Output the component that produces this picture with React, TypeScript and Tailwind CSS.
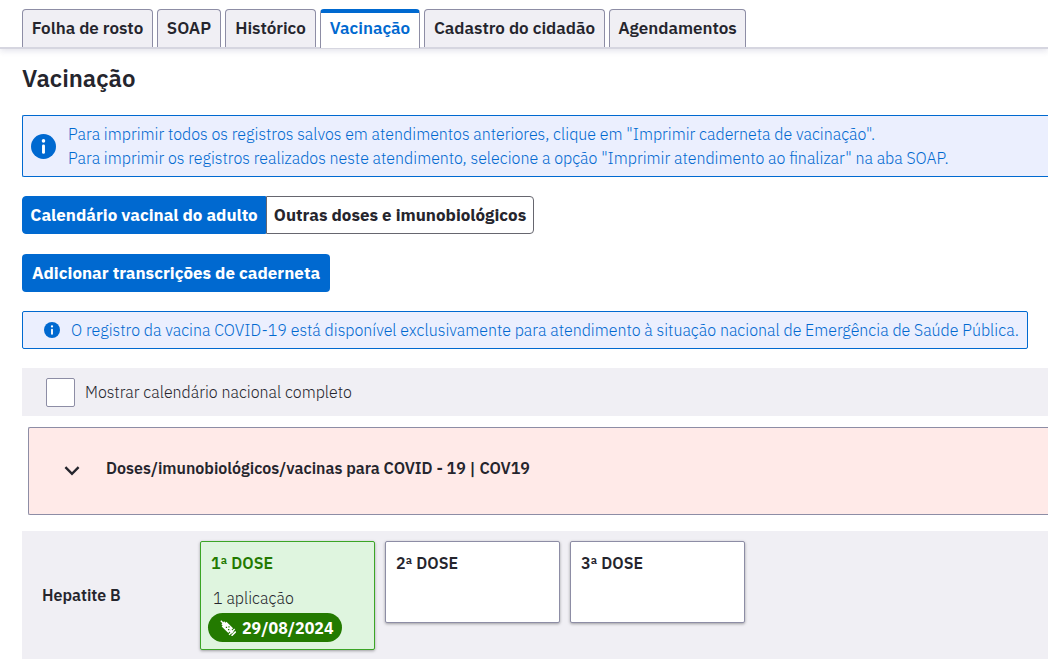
import { useState } from "react";

const tabs = [
  { label: "Folha de rosto", width: "min-w-[131px]" },
  { label: "SOAP", width: "min-w-16" },
  { label: "Histórico", width: "min-w-[91px]" },
  { label: "Vacinação", width: "min-w-[100px]" },
  { label: "Cadastro do cidadão", width: "min-w-[181px]" },
  { label: "Agendamentos", width: "min-w-[137px]" },
];

function InfoIcon({ className }: { className: string }) {
  return (
    <svg viewBox="0 0 24 24" className={className} aria-hidden="true">
      <circle cx="12" cy="12" r="12" fill="#0069d0" />
      <circle cx="12" cy="6.6" r="1.7" fill="#fff" />
      <rect x="10.6" y="10" width="2.8" height="9" rx="1.3" fill="#fff" />
    </svg>
  );
}

function SyringeIcon() {
  return (
    <svg viewBox="0 0 16 16" className="size-4" aria-hidden="true">
      <g transform="rotate(-45 8 8)" fill="#fff">
        <rect x="7.3" y="-2.2" width="1.4" height="3.2" />
        <path d="M6 .6h4v1.8h1.4v9.4H4.6V2.4H6z" />
        <rect x="6.6" y="11.6" width="2.8" height="3" />
        <rect x="4" y="12.8" width="8" height="1.3" />
        <rect x="5" y="15.2" width="6" height="1.6" rx="0.4" />
      </g>
      <path d="M5.8 7.4h1.3M8 9.6h1.3M8.4 6.9h1.2" stroke="#237a00" strokeWidth="1.1" />
    </svg>
  );
}

function Tabs() {
  const [active, setActive] = useState("Vacinação");
  return (
    <nav
      role="tablist"
      className="flex h-[49px] items-end gap-1 border-b-2 border-[#d6d6e0] pl-[22px] shadow-[0_2px_6px_rgba(60,60,110,0.14)]"
    >
      {tabs.map(({ label, width }) => {
        const selected = label === active;
        return (
          <button
            key={label}
            type="button"
            role="tab"
            aria-selected={selected}
            onClick={() => setActive(label)}
            className={`${width} shrink-0 rounded-t border-x border-[#8d8da5] text-[17px] leading-5 font-semibold whitespace-nowrap ${
              selected
                ? "-mb-px h-[39px] border-t-4 border-t-[#0069d0] bg-white pb-1.5 text-[#0069d0]"
                : "h-[38px] border-t bg-[#f0eff4] pb-0.5 text-[#25252d]"
            }`}
          >
            {label}
          </button>
        );
      })}
    </nav>
  );
}

function Dose({ label }: { label: string }) {
  return (
    <li className="h-[82px] w-[175px] rounded-xs border border-[#8d8da5] bg-white px-2.5 py-[11px] text-base leading-5 font-semibold shadow-[0_1px_3px_rgba(0,0,0,0.35)]">
      {label}
    </li>
  );
}

export default function App() {
  return (
    <div className="overflow-x-hidden bg-white font-['IBM_Plex_Sans',Roboto,sans-serif] text-base font-light text-[#25252d]">
      <Tabs />
      <main className="flex flex-col pl-[22px]">
        <h1 className="mt-[13px] text-2xl leading-8 font-semibold">Vacinação</h1>

        <div className="mt-[21px] flex items-center gap-3 rounded-l-xs border border-r-0 border-[#0069d0] bg-[#ebeffe] py-1.5 pl-2 leading-6 text-[#0069d0]">
          <InfoIcon className="size-[25px] shrink-0" />
          <div>
            <p>Para imprimir todos os registros salvos em atendimentos anteriores, clique em "Imprimir caderneta de vacinação".</p>
            <p>Para imprimir os registros realizados neste atendimento, selecione a opção "Imprimir atendimento ao finalizar" na aba SOAP.</p>
          </div>
        </div>

        <div className="mt-[19px] flex min-h-[38px] text-[17px] leading-6 font-bold">
          <button type="button" aria-pressed="true" className="min-w-[244px] rounded-l border border-[#0069d0] bg-[#0069d0] text-white">
            Calendário vacinal do adulto
          </button>
          <button type="button" aria-pressed="false" className="min-w-[268px] rounded-r border border-[#66666f] bg-white">
            Outras doses e imunobiológicos
          </button>
        </div>

        <button type="button" className="mt-5 h-[38px] min-w-[308px] self-start rounded bg-[#0069d0] text-[17px] leading-6 font-bold text-white">
          Adicionar transcrições de caderneta
        </button>

        <div className="mt-[19px] mr-5 flex min-h-[38px] items-center gap-[11px] rounded-xs border border-[#0069d0] bg-[#ebeffe] pl-[21px] text-[#0069d0]">
          <InfoIcon className="size-4 shrink-0" />
          <p>O registro da vacina COVID-19 está disponível exclusivamente para atendimento à situação nacional de Emergência de Saúde Pública.</p>
        </div>

        <label className="mt-[19px] flex h-12 items-center gap-2.5 bg-[#f0eff4] pl-6">
          <input type="checkbox" className="size-[29px] appearance-none rounded-xs border border-[#8d8da5] bg-white checked:bg-[#0069d0]" />
          Mostrar calendário nacional completo
        </label>

        <button
          type="button"
          aria-expanded="false"
          className="mt-[11px] ml-1.5 flex h-[88px] items-center gap-[26px] rounded-l-xs border border-r-0 border-[#8d8da5] bg-[#ffeae8] pb-1.5 pl-[35px] text-left font-semibold"
        >
          <svg viewBox="0 0 16 16" className="mt-1 size-4" fill="none" stroke="#25252d" strokeWidth="2.4" aria-hidden="true">
            <path d="M1.4 5.2 8 11.8l6.6-6.6" />
          </svg>
          Doses/imunobiológicos/vacinas para COVID - 19 | COV19
        </button>

        <section className="mt-4 mb-0.5 flex h-32 items-center bg-[#f0eff4] pl-5">
          <h2 className="w-[158px] shrink-0 font-semibold">Hepatite B</h2>
          <ul className="flex items-start gap-2.5 self-stretch pt-2.5">
            <li className="h-[109px] w-[175px] rounded-xs border border-[#3ba526] bg-[#dff5df] shadow-[0_1px_3px_rgba(0,0,0,0.35)]">
              <p className="px-2.5 pt-[11px] leading-5 font-semibold text-[#237a00]">1ª DOSE</p>
              <p className="mt-[15px] px-3 leading-5">1 aplicação</p>
              <p className="mt-[5px] ml-[7px] flex h-[29px] w-[134px] items-center gap-1.5 rounded-full bg-[#237a00] pl-3 font-bold text-white">
                <SyringeIcon />
                29/08/2024
              </p>
            </li>
            <Dose label="2ª DOSE" />
            <Dose label="3ª DOSE" />
          </ul>
        </section>
      </main>
    </div>
  );
}
